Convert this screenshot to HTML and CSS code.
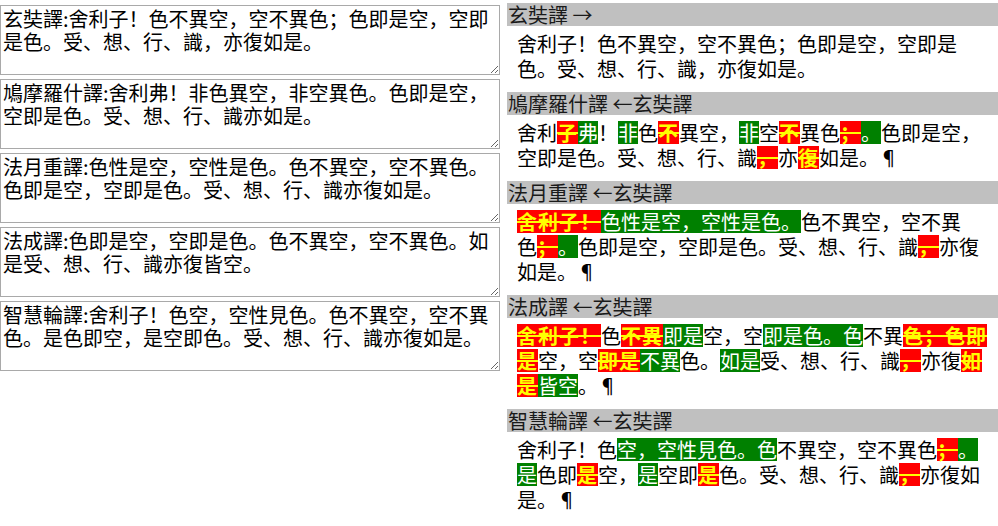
FILE: index.html
```html
<!DOCTYPE html>
<html lang="zh-Hans">
<head>
<meta charset="utf-8">
<title>心經譯本比較</title>
<link rel="stylesheet" href="styles.css">
</head>
<body>
<div class="page">
  <div class="inputs">
    <textarea class="src">玄奘譯:舍利子！色不異空，空不異色；色即是空，空即是色。受、想、行、識，亦復如是。</textarea>
    <textarea class="src">鳩摩羅什譯:舍利弗！非色異空，非空異色。色即是空，空即是色。受、想、行、識亦如是。</textarea>
    <textarea class="src">法月重譯:色性是空，空性是色。色不異空，空不異色。色即是空，空即是色。受、想、行、識亦復如是。</textarea>
    <textarea class="src">法成譯:色即是空，空即是色。色不異空，空不異色。如是受、想、行、識亦復皆空。</textarea>
    <textarea class="src">智慧輪譯:舍利子！色空，空性見色。色不異空，空不異色。是色即空，是空即色。受、想、行、識亦復如是。</textarea>
  </div>
  <div class="diffs">
    <section class="block">
      <div class="head">玄奘譯 →</div>
      <div class="body">舍利子！色不異空，空不異色；色即是空，空即是色。受、想、行、識，亦復如是。</div>
    </section>
    <section class="block">
      <div class="head">鳩摩羅什譯 ←玄奘譯</div>
      <div class="body">舍利<del class="del">子</del><ins class="ins">弗</ins>！<ins class="ins">非</ins>色<del class="del">不</del>異空，<ins class="ins">非</ins>空<del class="del">不</del>異色<del class="del">；</del><ins class="ins">。</ins>色即是空，空即是色。受、想、行、識<del class="del">，</del>亦<del class="del">復</del>如是。¶</div>
    </section>
    <section class="block">
      <div class="head">法月重譯 ←玄奘譯</div>
      <div class="body"><del class="del">舍利子！</del><ins class="ins">色性是空，空性是色。</ins>色不異空，空不異色<del class="del">；</del><ins class="ins">。</ins>色即是空，空即是色。受、想、行、識<del class="del">，</del>亦復如是。¶</div>
    </section>
    <section class="block">
      <div class="head">法成譯 ←玄奘譯</div>
      <div class="body"><del class="del">舍利子！</del>色<del class="del">不異</del><ins class="ins">即是</ins>空，空<ins class="ins">即是色。色</ins>不異<del class="del">色；色即是</del>空，空<del class="del">即是</del><ins class="ins">不異</ins>色。<ins class="ins">如是</ins>受、想、行、識<del class="del">，</del>亦復<del class="del">如是</del><ins class="ins">皆空</ins>。¶</div>
    </section>
    <section class="block">
      <div class="head">智慧輪譯 ←玄奘譯</div>
      <div class="body">舍利子！色<ins class="ins">空，空性見色。色</ins>不異空，空不異色<del class="del">；</del><ins class="ins">。是</ins>色即<del class="del">是</del>空，<ins class="ins">是</ins>空即<del class="del">是</del>色。受、想、行、識<del class="del">，</del>亦復如是。¶</div>
    </section>
  </div>
</div>
</body>
</html>
```
FILE: styles.css
```css
html, body {
  margin: 0;
  padding: 0;
  background: #fff;
}

body {
  font-family: "Noto Sans CJK SC", "Noto Sans CJK TC", sans-serif;
  font-size: 20px;
  color: #000;
  text-spacing-trim: space-all;
}

.page {
  display: flex;
  align-items: flex-start;
}

.inputs {
  width: 500px;
  flex: none;
  display: flex;
  flex-direction: column;
  gap: 4px;
  padding-top: 5px;
}

.src {
  display: block;
  box-sizing: border-box;
  width: 500px;
  height: 70px;
  margin: 0;
  padding: 1px 2px;
  border: 1px solid #a9a9a9;
  font-family: "Noto Sans CJK SC", "Noto Sans CJK TC", sans-serif;
  font-size: 20px;
  line-height: 23px;
  color: #000;
  text-spacing-trim: space-all;
  overflow: hidden;
  resize: both;
}

.diffs {
  flex: 1;
  margin-left: 7px;
  padding-top: 3px;
  min-width: 0;
}

.head {
  height: 23px;
  line-height: 23px;
  background: #c0c0c0;
  color: #1a1a1a;
  padding-left: 1px;
  white-space: nowrap;
}

.body {
  padding: 5px 6px 11px 10px;
  line-height: 25px;
}

.del,
.ins {
  text-decoration: none;
  background-image: linear-gradient(var(--hl), var(--hl));
  background-repeat: repeat-x;
  background-position: 0 50%;
  background-size: 1px 23px;
}

.del {
  --hl: #ff0000;
  color: #ffff00;
  font-weight: bold;
  letter-spacing: 1px;
  text-decoration: line-through;
  text-decoration-color: #ffff00;
}

.ins {
  --hl: #008000;
  color: #ffffff;
}
```
